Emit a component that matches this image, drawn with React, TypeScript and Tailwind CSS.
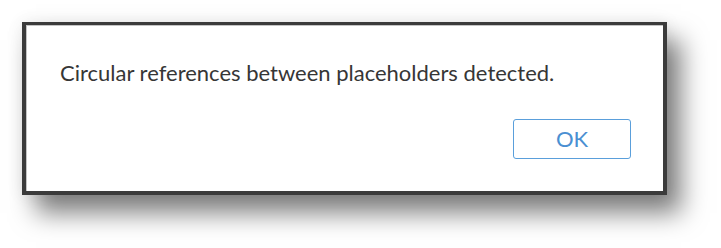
import React from 'react';

export default function App() {
    return (
        <div className="w-[721px] h-[248px] bg-white pl-[22px] pt-[22px] font-['Lato','Liberation_Sans',sans-serif]">
            <div className="w-[645px] h-[173px] bg-[#3b3b3b] pl-[4px] pt-[3px] pr-[4px] pb-[4px] flex flex-col shadow-[14px_18px_24px_rgba(0,0,0,0.5),0_0_16px_rgba(0,0,0,0.08)]">
                <div className="flex-1 bg-white border-l border-t border-[#c4c4c4] flex flex-col">
                    <p className="pl-[33px] pt-[33px] text-[22px] leading-[28px] text-[#363636]">
                        Circular references between placeholders detected.
                    </p>
                    <div className="flex justify-end pr-[32px] pt-[32px]">
                        <button className="w-[118px] h-[40px] border border-[#5a9fdb] rounded-[3px] text-[22px] leading-none text-[#4a8fd2] bg-white">
                            OK
                        </button>
                    </div>
                </div>
            </div>
        </div>
    );
}
